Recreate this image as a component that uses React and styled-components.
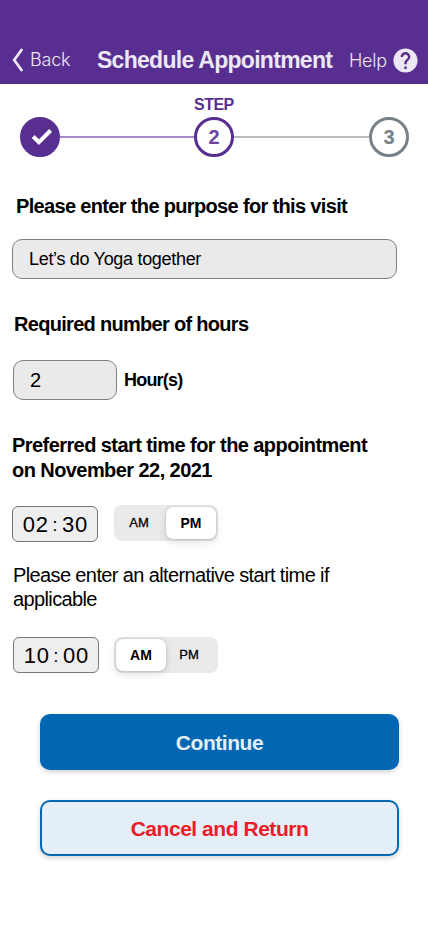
import React, { useState } from "react";
import styled, { createGlobalStyle } from "styled-components";
import { MdHelp } from "react-icons/md";

const purple = "#582f91";
const blue = "#0267b2";
const grey = "#788187";

const GlobalStyle = createGlobalStyle`
  * { box-sizing: border-box; }
  body { margin: 0; background: #fff; }
  button, input { font: inherit; color: inherit; margin: 0; }
`;

const Screen = styled.div`
  width: 428px;
  height: 926px;
  overflow: hidden;
  background: #fff;
  color: #000;
  font-family: "Liberation Sans", Arial, sans-serif;
`;

const Header = styled.header`
  display: grid;
  grid-template-columns: 97px 1fr 79px;
  align-items: center;
  height: 84px;
  padding-top: 36px;
  background: ${purple};
  color: #ece8f3;
`;

const NavLink = styled.a`
  display: flex;
  align-items: center;
  gap: ${(p) => p.$gap}px;
  padding-left: ${(p) => p.$inset || 0}px;
  font: 300 18px/24px Inter, sans-serif;
  letter-spacing: ${(p) => p.$spacing}px;
  white-space: nowrap;
  svg { flex: none; }
`;

const NavText = styled.span`
  padding-top: ${(p) => p.$drop || 0}px;
`;

const Title = styled.h1`
  margin: 0;
  font-size: 23px;
  line-height: 24px;
  letter-spacing: -0.72px;
  white-space: nowrap;
`;

const Stepper = styled.section`
  padding: 10px 19px 0 20px;
`;

const StepLabel = styled.div`
  height: 23px;
  padding: 1px 0 0 174px;
  color: ${purple};
  font-size: 16px;
  font-weight: 700;
  line-height: 20px;
  letter-spacing: -0.5px;
`;

const Track = styled.div`
  display: grid;
  grid-template-columns: 40px 134px 40px 135px 40px;
  align-items: center;
`;

const Step = styled.div`
  display: flex;
  align-items: center;
  justify-content: center;
  width: 40px;
  height: 40px;
  border: 3px solid ${(p) => p.$color};
  border-radius: 50%;
  background: ${(p) => (p.$done ? p.$color : "#fff")};
  color: ${(p) => p.$ink};
  font-size: 20px;
  font-weight: 700;
  line-height: 24px;
`;

const Connector = styled.div`
  height: 2px;
  background: ${(p) => p.$color};
`;

const Form = styled.main`
  padding: 37px 0 0 12px;
`;

const Heading = styled.h2`
  margin: ${(p) => p.$before || 0}px 0 ${(p) => p.$after}px ${(p) => p.$indent || 0}px;
  font-size: 20px;
  font-weight: ${(p) => p.$weight || 700};
  line-height: ${(p) => p.$line || 24}px;
  letter-spacing: ${(p) => p.$spacing || -0.6}px;
  white-space: nowrap;
`;

const Field = styled.input`
  display: block;
  width: ${(p) => p.$width}px;
  height: 40px;
  padding: 0 16px;
  border: 1px solid ${grey};
  border-radius: 10px;
  outline: 0;
  background: #eaeaea;
  font-size: ${(p) => p.$size}px;
  letter-spacing: ${(p) => p.$spacing || 0}px;
`;

const HoursRow = styled.div`
  display: flex;
  align-items: center;
  gap: 7px;
  margin: 0 0 33px 1px;
`;

const Unit = styled.span`
  font-size: 18px;
  font-weight: 700;
  letter-spacing: -0.8px;
`;

const TimeRow = styled.div`
  display: flex;
  align-items: flex-start;
  gap: ${(p) => p.$gap}px;
  margin: 0 0 ${(p) => p.$after}px ${(p) => p.$indent}px;
`;

const TimeBox = styled.div`
  display: flex;
  align-items: center;
  justify-content: center;
  gap: 4px;
  width: 86px;
  height: 36px;
  padding-top: 2px;
  margin-top: ${(p) => p.$drop}px;
  border: 1px solid #76767a;
  border-radius: 6px;
  background: #eeeeef;
  font-size: 22px;
  line-height: 32px;
`;

const Digits = styled.span`
  letter-spacing: 0.8px;
  margin-right: -0.8px;
`;

const Colon = styled.span`
  width: 6px;
  font-size: 19px;
  text-align: center;
`;

const Segments = styled.div`
  display: flex;
  width: 104px;
  height: 36px;
  padding: 2px;
  border-radius: 8px;
  background: #eaeaea;
`;

const Segment = styled.button`
  width: 50px;
  padding: 0 ${(p) => (p.$active ? 0 : 4)}px 1px 0;
  border: 0;
  border-radius: 7px;
  background: ${(p) => (p.$active ? "#fff" : "transparent")};
  box-shadow: ${(p) => (p.$active ? "0 3px 8px rgba(0,0,0,.13), 0 0 2px rgba(0,0,0,.22)" : "none")};
  font-size: ${(p) => (p.$active ? 14 : 13)}px;
  font-weight: ${(p) => (p.$active ? 700 : 400)};
  -webkit-text-stroke: ${(p) => (p.$active ? 0 : 0.3)}px #000;
`;

const Actions = styled.div`
  display: grid;
  gap: 30px;
  width: 359px;
  margin-left: 28px;
`;

const ActionButton = styled.button`
  height: 56px;
  padding: 1px 0 0;
  border: 2px solid ${blue};
  border-radius: 10px;
  background: ${(p) => (p.$primary ? blue : "#e4eef7")};
  color: ${(p) => (p.$primary ? "#e4eef7" : "#ed1c27")};
  box-shadow: 0 2px 5px rgba(0, 0, 0, 0.18);
  font-size: 21px;
  font-weight: 700;
  letter-spacing: -0.46px;
`;

function Period({ initial }) {
  const [value, setValue] = useState(initial);
  return (
    <Segments>
      {["AM", "PM"].map((p) => (
        <Segment key={p} $active={p === value} onClick={() => setValue(p)}>{p}</Segment>
      ))}
    </Segments>
  );
}

function Time({ hours, minutes, drop = 0 }) {
  return (
    <TimeBox $drop={drop}>
      <Digits>{hours}</Digits>
      <Colon>:</Colon>
      <Digits>{minutes}</Digits>
    </TimeBox>
  );
}

export default function App() {
  return (
    <>
      <GlobalStyle />
      <Screen>
        <Header>
          <NavLink $gap={6} $inset={12} $spacing={-0.2}>
            <svg width="12" height="24" viewBox="0 0 12 24" fill="none" stroke="currentColor" strokeWidth="2.7">
              <path d="M10.2 1 2.2 12l8 11" />
            </svg>
            <NavText>Back</NavText>
          </NavLink>
          <Title>Schedule Appointment</Title>
          <NavLink $gap={4} $spacing={-0.25}>
            <NavText $drop={2}>Help</NavText>
            <MdHelp size={29} />
          </NavLink>
        </Header>
        <Stepper>
          <StepLabel>STEP</StepLabel>
          <Track>
            <Step $done $color={purple} $ink="#fff">
              <svg width="24" height="24" viewBox="0 0 24 24" fill="none" stroke="currentColor" strokeWidth="4">
                <path d="m5.2 11.5 5.7 5.7L22.6 5.5" />
              </svg>
            </Step>
            <Connector $color="#a98ac8" />
            <Step $color={purple} $ink="#6b45a0">2</Step>
            <Connector $color="#b8bdc0" />
            <Step $color={grey} $ink={grey}>3</Step>
          </Track>
        </Stepper>
        <Form>
          <Heading $after={21} $indent={4} $spacing={-0.66}>Please enter the purpose for this visit</Heading>
          <Field $width={385} $size={18} $spacing={-0.31} defaultValue="Let’s do Yoga together" />
          <Heading $before={33} $after={24} $indent={2} $spacing={-0.7}>Required number of hours</Heading>
          <HoursRow>
            <Field $width={104} $size={20} defaultValue="2" />
            <Unit>Hour(s)</Unit>
          </HoursRow>
          <Heading $after={22} $line={25} $spacing={-0.57}>
            Preferred start time for the appointment<br />on November 22, 2021
          </Heading>
          <TimeRow $gap={16} $indent={0} $after={21}>
            <Time hours="02" minutes="30" drop={1} />
            <Period initial="PM" />
          </TimeRow>
          <Heading as="p" $weight={400} $after={26} $indent={1} $spacing={-0.62}>
            Please enter an alternative start time if<br />applicable
          </Heading>
          <TimeRow $gap={15} $indent={1} $after={41}>
            <Time hours="10" minutes="00" />
            <Period initial="AM" />
          </TimeRow>
          <Actions>
            <ActionButton $primary>Continue</ActionButton>
            <ActionButton>Cancel and Return</ActionButton>
          </Actions>
        </Form>
      </Screen>
    </>
  );
}
